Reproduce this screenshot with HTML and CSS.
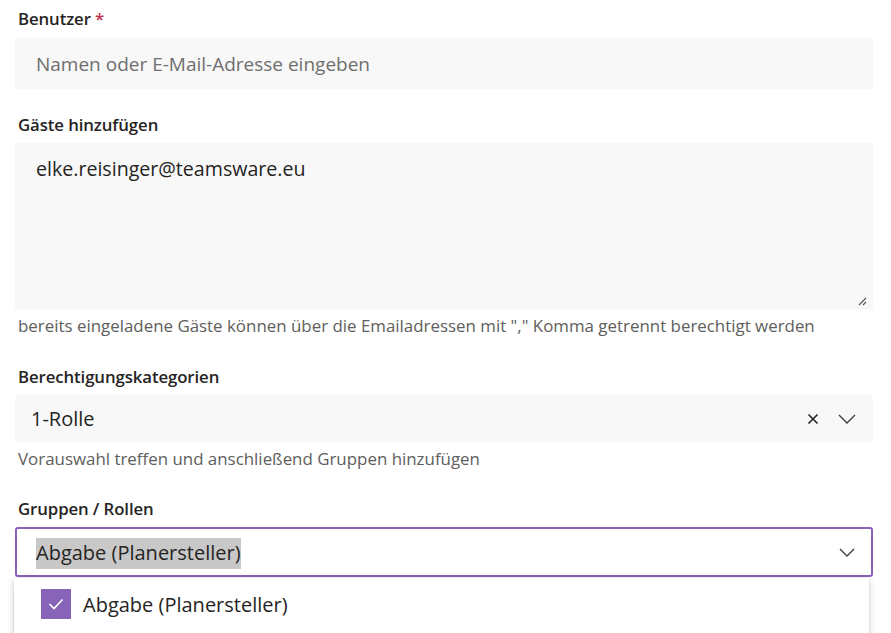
FILE: index.html
```html
<!DOCTYPE html>
<html lang="de">
<head>
<meta charset="utf-8">
<title>Formular</title>
<link rel="stylesheet" href="styles.css">
</head>
<body>
<div class="form">
  <div class="field">
    <div class="label">Benutzer <span class="req">*</span></div>
    <div class="input placeholder">Namen oder E-Mail-Adresse eingeben</div>
  </div>

  <div class="field">
    <div class="label">Gäste hinzufügen</div>
    <div class="textarea">
      <span class="value">elke.reisinger@teamsware.eu</span>
      <svg class="grip" width="10" height="10" viewBox="0 0 10 10"><path d="M9 2 L2 9 M9 6 L6 9" stroke="#555" stroke-width="1.2" fill="none"/></svg>
    </div>
    <div class="help">bereits eingeladene Gäste können über die Emailadressen mit "," Komma getrennt berechtigt werden</div>
  </div>

  <div class="field">
    <div class="label">Berechtigungskategorien</div>
    <div class="select">
      <span class="value">1-Rolle</span>
      <svg class="clear" width="12" height="12" viewBox="0 0 12 12"><path d="M1.5 1.5 L10.5 10.5 M10.5 1.5 L1.5 10.5" stroke="#252423" stroke-width="1.6"/></svg>
      <svg class="chev" width="18" height="10" viewBox="0 0 18 10"><path d="M1 1 L9 9 L17 1" stroke="#3b3a39" stroke-width="1.3" fill="none"/></svg>
    </div>
    <div class="help help-short">Vorauswahl treffen und anschließend Gruppen hinzufügen</div>
  </div>

  <div class="field">
    <div class="label">Gruppen / Rollen</div>
    <div class="combo">
      <div class="select focused">
        <span class="value"><span class="hl">Abgabe (Planersteller)</span></span>
        <svg class="chev" width="16" height="9" viewBox="0 0 16 9"><path d="M1 1 L8 8 L15 1" stroke="#3b3a39" stroke-width="1.3" fill="none"/></svg>
      </div>
      <div class="menu">
        <div class="option">
          <span class="check"><svg width="16" height="12" viewBox="0 0 16 12"><path d="M1.5 6 L6 10.5 L14.5 1.5" stroke="#fff" stroke-width="1.6" fill="none"/></svg></span>
          <span class="opt-text">Abgabe (Planersteller)</span>
        </div>
      </div>
    </div>
  </div>
</div>
</body>
</html>
```

FILE: styles.css
```css
html, body {
  margin: 0;
  padding: 0;
  background: #ffffff;
  overflow: hidden;
}
body {
  font-family: "Open Sans", "Noto Sans", sans-serif;
  color: #252423;
  width: 891px;
  height: 633px;
}
.form {
  padding: 7px 18px 0 15px;
}
.field {
  display: flex;
  flex-direction: column;
}
.label {
  font-size: 16.8px;
  font-weight: 600;
  line-height: 24px;
  padding-left: 3px;
  margin-bottom: 6px;
  letter-spacing: -0.1px;
}
.req { color: #c4314b; }
.input {
  height: 51px;
  margin-top: 1px;
  background: #f8f8f8;
  border-radius: 3px;
  display: flex;
  align-items: center;
  padding-left: 21px;
  font-size: 19px;
  margin-bottom: 24px;
}
.placeholder { color: #6e6e6e; }
.textarea {
  position: relative;
  height: 167px;
  background: #f8f8f8;
  border-radius: 3px;
  padding: 12px 21px 0;
  box-sizing: border-box;
  font-size: 19.6px;
  line-height: 28px;
}
.grip {
  position: absolute;
  right: 6px;
  bottom: 4px;
}
.help {
  font-size: 16.9px;
  color: #605e5c;
  line-height: 22px;
  padding-left: 3px;
  margin-top: 5px;
  margin-bottom: 28px;
}
.help-short {
  margin-top: 6px;
  margin-bottom: 27px;
}
.select {
  height: 47px;
  background: #f8f8f8;
  border-radius: 3px;
  display: flex;
  align-items: center;
  padding: 0 17px 0 16px;
  font-size: 20px;
}
.select .value { flex: 1; }
.clear { margin-right: 19px; }
.combo { position: relative; }
.select.focused {
  height: 50px;
  box-sizing: border-box;
  background: #ffffff;
  border: 2px solid #8764b8;
  padding-left: 19px;
  padding-right: 16px;
}
.hl {
  background: #c8c8c8;
  padding: 1px 0 3px;
}
.menu {
  background: #ffffff;
  margin-top: 1px;
  margin-right: 4px;
  margin-left: -1px;
  box-shadow: 0 3px 8px rgba(0,0,0,0.18), 0 0 2px rgba(0,0,0,0.12);
  height: 60px;
}
.option {
  display: flex;
  align-items: center;
  padding: 11px 0 0 27px;
}
.check {
  width: 30px;
  height: 30px;
  background: #8764b8;
  display: flex;
  align-items: center;
  justify-content: center;
  margin-right: 12px;
}
.opt-text { font-size: 20px; }
```
